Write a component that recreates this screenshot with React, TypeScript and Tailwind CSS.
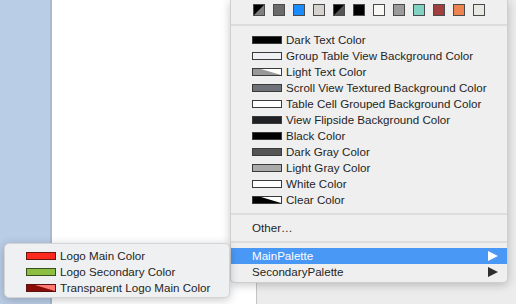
import React from 'react';

type Bar = { name: string; fill: string; split?: string; border?: string };

const swatches: { fill: string; split?: string }[] = [
  { fill: '#000000', split: '#808080' },
  { fill: '#6b6b6b' },
  { fill: '#1a8cff' },
  { fill: '#d5d2ce' },
  { fill: '#000000', split: '#555555' },
  { fill: '#000000' },
  { fill: '#f9f7f3' },
  { fill: '#9b9b9b' },
  { fill: '#80d2c2' },
  { fill: '#a13f3f' },
  { fill: '#ef8350' },
  { fill: '#e9e7e1' },
];

const colors: Bar[] = [
  { name: 'Dark Text Color', fill: '#000000' },
  { name: 'Group Table View Background Color', fill: '#efeff4' },
  { name: 'Light Text Color', fill: '#ffffff', split: '#999999' },
  { name: 'Scroll View Textured Background Color', fill: '#6f7178' },
  { name: 'Table Cell Grouped Background Color', fill: '#ffffff' },
  { name: 'View Flipside Background Color', fill: '#1f2125' },
  { name: 'Black Color', fill: '#000000' },
  { name: 'Dark Gray Color', fill: '#555555' },
  { name: 'Light Gray Color', fill: '#aaaaaa' },
  { name: 'White Color', fill: '#ffffff' },
  { name: 'Clear Color', fill: '#ffffff', split: '#000000' },
];

const logoColors: Bar[] = [
  { name: 'Logo Main Color', fill: '#ff2a1f', border: '#6b1510' },
  { name: 'Logo Secondary Color', fill: '#8cbe42', border: '#3c4d22' },
  { name: 'Transparent Logo Main Color', fill: '#ff7a72', split: '#8a0c08', border: '#5a1210' },
];

function ColorBar({ bar }: { bar: Bar }) {
  return (
    <svg width="30" height="8" viewBox="0 0 30 8" className="shrink-0">
      <rect x="0.5" y="0.5" width="29" height="7" fill={bar.fill} stroke={bar.border ?? '#3a3a3a'} />
      {bar.split && <polygon points="1,1 9,1 29,7 1,7" fill={bar.split} />}
    </svg>
  );
}

function Swatch({ fill, split }: { fill: string; split?: string }) {
  return (
    <svg width="12" height="12" viewBox="0 0 12 12" className="shrink-0">
      <rect x="0.5" y="0.5" width="11" height="11" fill={fill} stroke="#4a4a4a" />
      {split && <polygon points="11,1 11,11 1,11" fill={split} />}
    </svg>
  );
}

function Separator() {
  return (
    <div className="h-[12px] flex items-center">
      <div className="w-full h-[2px] bg-[#dcdcdc]" />
    </div>
  );
}

function Arrow({ color }: { color: string }) {
  return (
    <svg width="10" height="10" viewBox="0 0 10 10">
      <polygon points="0,0 10,5 0,10" fill={color} />
    </svg>
  );
}

export default function App() {
  return (
    <div
      className="relative w-[516px] h-[304px] overflow-hidden flex text-[#252525]"
      style={{ fontFamily: '"Liberation Sans", Arial, sans-serif' }}
    >
      {/* window behind the menus */}
      <div className="w-[50px] bg-[#bacde6]" />
      <div className="w-[2px] bg-[#a9b9ce]" />
      <div className="w-[204px] bg-white" />
      <div className="w-[1px] bg-[#c4c4c4]" />
      <div className="flex-1 bg-[#ececec]" />

      {/* main colour menu */}
      <div className="absolute left-[230px] top-0 w-[278px] h-[283px] bg-[#efefef] border border-t-0 border-[#cfcfcf] rounded-b-[5px] shadow-[0_2px_10px_rgba(0,0,0,0.22)] pt-[4px] text-[11.6px]">
        <div className="flex gap-[8px] pl-[22px] h-[12px]">
          {swatches.map((s, i) => (
            <Swatch key={i} fill={s.fill} split={s.split} />
          ))}
        </div>
        <div className="h-[3px]" />
        <Separator />
        <div className="h-[1px]" />
        {colors.map((c) => (
          <div key={c.name} className="h-[16px] flex items-center pl-[21px]">
            <ColorBar bar={c} />
            <span className="ml-[4px] leading-none whitespace-nowrap">{c.name}</span>
          </div>
        ))}
        <Separator />
        <div className="h-[16px] flex items-center pl-[21px]">Other…</div>
        <Separator />
        <div className="h-[16px] flex items-center justify-between pl-[21px] pr-[9px] bg-[#4a98f6] text-white">
          <span>MainPalette</span>
          <Arrow color="#ffffff" />
        </div>
        <div className="h-[16px] flex items-center justify-between pl-[21px] pr-[9px]">
          <span>SecondaryPalette</span>
          <Arrow color="#2e2e2e" />
        </div>
      </div>

      {/* submenu */}
      <div className="absolute left-[4px] top-[243px] w-[226px] h-[55px] bg-[#eef0f1] border border-[#d2d4d6] rounded-[5px] shadow-[0_2px_10px_rgba(0,0,0,0.22)] pt-[4px] text-[11.6px]">
        {logoColors.map((c) => (
          <div key={c.name} className="h-[16px] flex items-center pl-[21px]">
            <ColorBar bar={c} />
            <span className="ml-[4px] leading-none whitespace-nowrap">{c.name}</span>
          </div>
        ))}
      </div>
    </div>
  );
}
